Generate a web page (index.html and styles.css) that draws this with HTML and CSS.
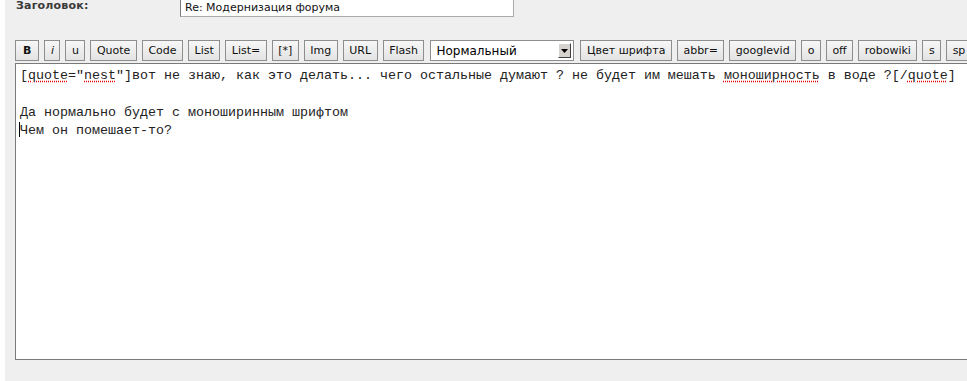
FILE: index.html
```html
<!DOCTYPE html>
<html lang="ru">
<head>
<meta charset="utf-8">
<title>Ответ</title>
<link rel="stylesheet" href="styles.css">
</head>
<body>
<div class="panel">
  <div class="title-row">
    <span class="label">Заголовок:</span>
    <div class="input">Re: Модернизация форума</div>
  </div>
  <div class="toolbar">
    <button class="btn bold">B</button>
    <button class="btn italic">i</button>
    <button class="btn">u</button>
    <button class="btn">Quote</button>
    <button class="btn">Code</button>
    <button class="btn">List</button>
    <button class="btn">List=</button>
    <button class="btn">[*]</button>
    <button class="btn">Img</button>
    <button class="btn">URL</button>
    <button class="btn">Flash</button>
    <div class="select"><span class="select-text">Нормальный</span><span class="select-arrow"><svg width="7" height="4" viewBox="0 0 7 4"><path d="M0 0h7L3.5 4z" fill="#000"/></svg></span></div>
    <button class="btn">Цвет шрифта</button>
    <button class="btn">abbr=</button>
    <button class="btn">googlevid</button>
    <button class="btn">o</button>
    <button class="btn">off</button>
    <button class="btn">robowiki</button>
    <button class="btn">s</button>
    <button class="btn">sp</button>
  </div>
  <div class="editor"><div class="line">[<span class="sp">quote</span>="<span class="sp">nest</span>"]вот не знаю, как это делать... чего остальные думают ? не будет им мешать <span class="sp">моноширность</span> в воде ?[/<span class="sp">quote</span>]</div><div class="line">&nbsp;</div><div class="line">Да нормально будет с моноширинным шрифтом</div><div class="line"><span class="caret"></span>Чем он помешает-то?</div></div>
</div>
</body>
</html>
```

FILE: styles.css
```css
html, body {
  margin: 0;
  padding: 0;
  background: #ffffff;
  overflow: hidden;
  height: 381px;
}

.panel {
  margin-left: 5px;
  height: 381px;
  background: #efefef;
  padding-left: 10px;
  overflow: hidden;
}

.title-row {
  display: flex;
  align-items: flex-start;
  margin-top: -3px;
  height: 20px;
}

.label {
  font-family: "DejaVu Sans", Verdana, sans-serif;
  font-weight: bold;
  font-size: 11px;
  color: #3a3a3a;
  letter-spacing: 0.2px;
  width: 164px;
  padding-left: 1px;
  line-height: 13px;
  margin-top: 2px;
}

.input {
  width: 334px;
  height: 20px;
  box-sizing: border-box;
  background: #fff;
  border: 1px solid #ababab;
  border-left-color: #7a7a7a;
  border-top-color: #7a7a7a;
  font-family: "DejaVu Sans", Verdana, sans-serif;
  font-size: 11px;
  color: #111;
  padding: 4px 0 0 4px;
  line-height: 12px;
}

.toolbar {
  display: flex;
  gap: 5px;
  margin-top: 23px;
  height: 21px;
  white-space: nowrap;
}

.btn {
  flex: none;
  height: 21px;
  box-sizing: border-box;
  margin: 0;
  padding: 0 5.5px;
  border: 1px solid #8e8e8e;
  background: linear-gradient(#f7f7f7, #e3e3e3);
  font-family: "DejaVu Sans", Verdana, sans-serif;
  font-size: 11px;
  color: #111;
  line-height: 19px;
}

.bold {
  font-weight: bold;
  padding: 0 7px;
}

.italic {
  font-style: italic;
  padding: 0 5.5px;
}

.select {
  flex: none;
  width: 144px;
  height: 21px;
  box-sizing: border-box;
  border: 1px solid #8e8e8e;
  background: #fff;
  display: flex;
  align-items: center;
  justify-content: space-between;
  padding: 0 2px 0 5px;
  margin: 0 1px 0 1px;
}

.select-text {
  font-family: "DejaVu Sans", Verdana, sans-serif;
  font-size: 12px;
  color: #000;
}

.select-arrow {
  width: 13px;
  height: 15px;
  box-sizing: border-box;
  background: #d6d3ce;
  border: 1px solid;
  border-color: #fff #404040 #404040 #fff;
  display: flex;
  align-items: center;
  justify-content: center;
}

.editor {
  margin-top: 2px;
  width: 1000px;
  height: 297px;
  box-sizing: border-box;
  background: #fff;
  border: 1px solid #7a7a7a;
  border-right: none;
  padding: 3px 0 0 4px;
  font-family: "Liberation Mono", "Courier New", monospace;
  font-size: 13.33px;
  line-height: 18.4px;
  color: #222;
  white-space: pre;
}

.line {
  height: 18.4px;
}

.sp {
  text-decoration: underline dotted #e00000;
  text-underline-offset: 2px;
}

.caret {
  display: inline-block;
  width: 0;
  height: 15px;
  border-left: 1px solid #000;
  vertical-align: -3px;
  margin-left: -1px;
}
```
